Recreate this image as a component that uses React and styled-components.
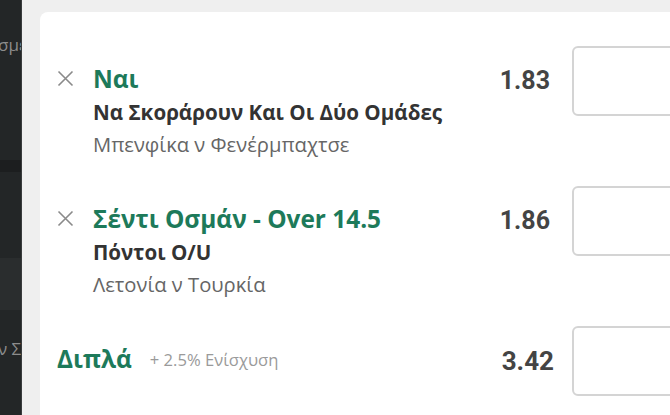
import styled, { createGlobalStyle } from "styled-components";

const GlobalStyle = createGlobalStyle`
  html, body {
    margin: 0;
    padding: 0;
    width: 670px;
    height: 415px;
    overflow: hidden;
    background: #efefef;
    font-family: "Open Sans", Roboto, "Liberation Sans", sans-serif;
  }
`;

const selections = [
  {
    title: "Ναι",
    market: "Να Σκοράρουν Και Οι Δύο Ομάδες",
    event: "Μπενφίκα ν Φενέρμπαχτσε",
    odds: "1.83",
  },
  {
    title: "Σέντι Οσμάν - Over 14.5",
    market: "Πόντοι O/U",
    event: "Λετονία ν Τουρκία",
    odds: "1.86",
  },
];

function CloseIcon() {
  return (
    <svg width="17" height="17" viewBox="0 0 17 17">
      <path d="M1.5 1.5L15.5 15.5M15.5 1.5L1.5 15.5" stroke="#8a8a8a" strokeWidth="1.6" fill="none" />
    </svg>
  );
}

export default function App() {
  return (
    <>
      <GlobalStyle />
      <Page>
        <Sidebar>
          <SideBand $h={30} />
          <SideText $h={30}>σμε</SideText>
          <SideBand $h={100} />
          <SideBand $h={12} $tone="dark" />
          <SideBand $h={86} />
          <SideBand $h={52} $tone="light" />
          <SideBand $h={26} />
          <SideText $h={26}>ν Σ</SideText>
          <SideBand $h={60} />
        </Sidebar>
        <Main>
          <Card>
            {selections.map((s) => (
              <Row key={s.title}>
                <Selection>
                  <TitleLine>
                    <Remove>
                      <CloseIcon />
                    </Remove>
                    <Title>{s.title}</Title>
                  </TitleLine>
                  <Market>{s.market}</Market>
                  <Event>{s.event}</Event>
                </Selection>
                <Odds>{s.odds}</Odds>
                <Stake />
              </Row>
            ))}
            <Row>
              <Selection>
                <TitleLine $bare>
                  <Title>Διπλά</Title>
                  <Boost>+ 2.5% Ενίσχυση</Boost>
                </TitleLine>
              </Selection>
              <Odds $big>3.42</Odds>
              <Stake />
            </Row>
          </Card>
        </Main>
      </Page>
    </>
  );
}

const Page = styled.div`
  display: flex;
  width: 670px;
  height: 415px;
  overflow: hidden;
`;

const Sidebar = styled.div`
  width: 21px;
  flex-shrink: 0;
  display: flex;
  flex-direction: column;
  background: #232627;
  border-right: 1px solid #3a3c3d;
  overflow: hidden;
`;

const SideBand = styled.div`
  height: ${(p) => p.$h}px;
  flex-shrink: 0;
  background: ${(p) =>
    p.$tone === "dark" ? "#1c1e1f" : p.$tone === "light" ? "#2a2d2e" : "#232627"};
`;

const SideText = styled.div`
  height: ${(p) => p.$h}px;
  flex-shrink: 0;
  line-height: ${(p) => p.$h}px;
  margin-left: -2px;
  white-space: nowrap;
  font-size: 17px;
  color: #8c8c8c;
`;

const Main = styled.div`
  flex: 1;
  padding: 12px 0 0 18px;
  background: #efefef;
`;

const Card = styled.div`
  height: 100%;
  background: #ffffff;
  border-radius: 8px 0 0 0;
  padding: 34px 0 0 17px;
  box-sizing: border-box;
  overflow: hidden;
`;

const Row = styled.div`
  display: flex;
  align-items: flex-start;
  height: 140px;
`;

const Selection = styled.div`
  flex: 1;
  padding-top: 18px;
`;

const TitleLine = styled.div`
  display: flex;
  align-items: center;
  height: 28px;
  gap: ${(p) => (p.$bare ? "18px" : "0")};
`;

const Remove = styled.div`
  width: 36px;
  display: flex;
  align-items: center;
`;

const Title = styled.div`
  font-size: 24.4px;
  font-weight: 700;
  color: #1d7a5a;
  white-space: nowrap;
`;

const Boost = styled.div`
  font-size: 16.6px;
  color: #9a9a9a;
  padding-top: 2px;
`;

const Market = styled.div`
  margin: 4px 0 0 36px;
  font-size: 20.6px;
  line-height: 32px;
  font-weight: 700;
  color: #333333;
  white-space: nowrap;
`;

const Event = styled.div`
  margin-left: 36px;
  font-size: 20.2px;
  line-height: 32px;
  color: #666666;
  white-space: nowrap;
`;

const Odds = styled.div`
  height: 70px;
  line-height: 70px;
  margin-right: ${(p) => (p.$big ? "18px" : "22px")};
  font-family: Roboto, sans-serif;
  font-size: ${(p) => (p.$big ? "26px" : "25px")};
  font-weight: 700;
  color: #444444;
`;

const Stake = styled.div`
  width: 130px;
  height: 70px;
  flex-shrink: 0;
  border: 2px solid #d4d4d4;
  border-radius: 6px;
  box-sizing: border-box;
  margin-right: -32px;
`;
